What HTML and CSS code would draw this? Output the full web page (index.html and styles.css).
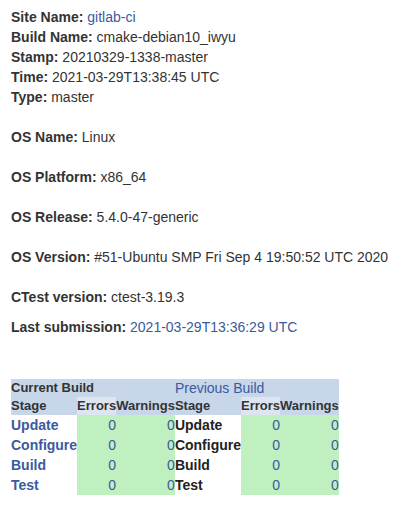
FILE: index.html
```html
<!DOCTYPE html>
<html>
<head>
<meta charset="utf-8">
<link rel="stylesheet" href="styles.css">
</head>
<body>
<div class="info">
  <div class="line"><b>Site Name:</b> <a class="link">gitlab-ci</a></div>
  <div class="line"><b>Build Name:</b> cmake-debian10_iwyu</div>
  <div class="line"><b>Stamp:</b> 20210329-1338-master</div>
  <div class="line"><b>Time:</b> 2021-03-29T13:38:45 UTC</div>
  <div class="line"><b>Type:</b> master</div>
  <div class="line sp20"><b>OS Name:</b> Linux</div>
  <div class="line sp20"><b>OS Platform:</b> x86_64</div>
  <div class="line sp20"><b>OS Release:</b> 5.4.0-47-generic</div>
  <div class="line sp20"><b>OS Version:</b> #51-Ubuntu SMP Fri Sep 4 19:50:52 UTC 2020</div>
  <div class="line sp20"><b>CTest version:</b> ctest-3.19.3</div>
  <div class="line sp10"><b>Last submission:</b> <a class="link">2021-03-29T13:36:29 UTC</a></div>
</div>
<div class="builds">
  <table class="build">
    <tr class="hrow"><td colspan="3" class="title">Current Build</td></tr>
    <tr class="hrow"><td class="th">Stage</td><td class="th errh">Errors</td><td class="th">Warnings</td></tr>
    <tr class="drow"><td class="stage stage-link">Update</td><td class="num">0</td><td class="num">0</td></tr>
    <tr class="drow"><td class="stage stage-link">Configure</td><td class="num">0</td><td class="num">0</td></tr>
    <tr class="drow"><td class="stage stage-link">Build</td><td class="num">0</td><td class="num">0</td></tr>
    <tr class="drow"><td class="stage stage-link">Test</td><td class="num">0</td><td class="num">0</td></tr>
  </table>
  <table class="build">
    <tr class="hrow"><td colspan="3" class="title prev">Previous Build</td></tr>
    <tr class="hrow"><td class="th">Stage</td><td class="th errh">Errors</td><td class="th">Warnings</td></tr>
    <tr class="drow"><td class="stage">Update</td><td class="num">0</td><td class="num">0</td></tr>
    <tr class="drow"><td class="stage">Configure</td><td class="num">0</td><td class="num">0</td></tr>
    <tr class="drow"><td class="stage">Build</td><td class="num">0</td><td class="num">0</td></tr>
    <tr class="drow"><td class="stage">Test</td><td class="num">0</td><td class="num">0</td></tr>
  </table>
</div>
</body>
</html>
```

FILE: styles.css
```css
html, body {
  margin: 0;
  padding: 0;
  background: #ffffff;
}
body {
  font-family: "Liberation Sans", Arial, sans-serif;
  font-size: 14px;
  color: #333333;
}
.info {
  padding: 7px 11px 0 11px;
}
.line {
  line-height: 20px;
  height: 20px;
  white-space: nowrap;
}
.line b {
  font-weight: bold;
}
.sp20 {
  margin-top: 20px;
}
.sp10 {
  margin-top: 10px;
}
.link {
  color: #3a5a9e;
  text-decoration: none;
}
.builds {
  display: flex;
  align-items: flex-start;
  margin: 42px 0 0 11px;
}
.build {
  border-collapse: collapse;
  border-spacing: 0;
}
.build td {
  padding: 0;
  white-space: nowrap;
}
.hrow td {
  background: #c7d6e8;
  height: 18px;
  line-height: 18px;
}
.title {
  font-size: 13px;
  font-weight: bold;
  color: #333333;
  text-align: left;
}
.title.prev {
  font-size: 14px;
  font-weight: normal;
  color: #3a5a9e;
}
.th {
  font-size: 13px;
  font-weight: bold;
  color: #333333;
  text-align: left;
}
.hrow td.errh {
  background: #dce5f0;
}
.drow td {
  height: 20px;
  line-height: 20px;
}
.stage {
  font-size: 14px;
  font-weight: bold;
  color: #222222;
  background: #ffffff;
}
.stage-link {
  color: #3a5a9e;
}
.num {
  background: #c0efc0;
  color: #3a5a9e;
  text-align: right;
  font-size: 14px;
}
```
